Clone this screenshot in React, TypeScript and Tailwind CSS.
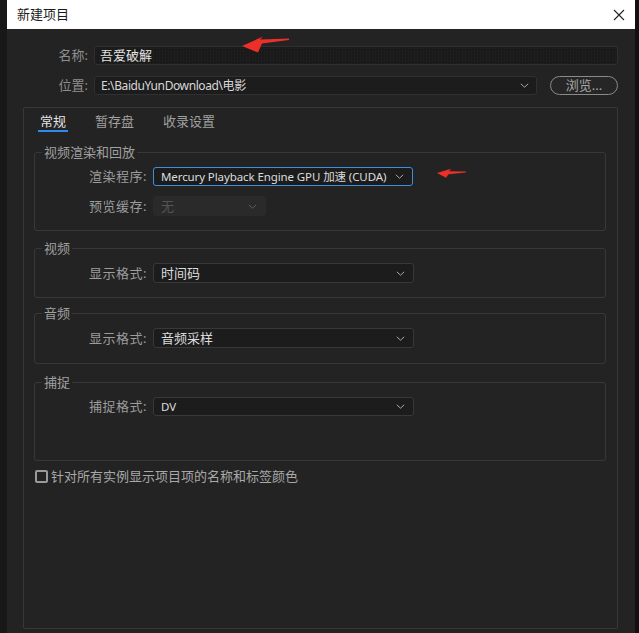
import React from 'react';

const Chevron = () => (
  <svg width="9" height="5" viewBox="0 0 9 5" className="shrink-0">
    <path d="M0.8 0.8 L4.5 4.2 L8.2 0.8" fill="none" stroke="#a8a8a8" strokeWidth="1" />
  </svg>
);

type SelectProps = {
  value: string;
  width: string;
  active?: boolean;
  disabled?: boolean;
  height?: string;
  small?: boolean;
};

const Select = ({ value, width, active, disabled, height = 'h-[20px]', small }: SelectProps) => (
  <div
    className={`${width} ${height} flex items-center justify-between pl-[7px] pr-[8px] rounded-[3px] border ${
      active
        ? 'border-[#3d8fe0] bg-[#1c1c1c]'
        : disabled
        ? 'border-[#2a2a2a] bg-[#2a2a2a]'
        : 'border-[#383838] bg-[#1c1c1c]'
    }`}
  >
    <span
      className={`whitespace-nowrap leading-none ${small ? 'text-[11.5px] tracking-[-0.1px]' : 'text-[13px]'} ${
        disabled ? 'text-[#555]' : 'text-[#dcdcdc]'
      }`}
    >
      {value}
    </span>
    <span className={disabled ? 'opacity-40' : ''}>
      <Chevron />
    </span>
  </div>
);

const Group = ({ title, children, pb }: { title: string; children: React.ReactNode; pb: string }) => (
  <fieldset className={`border border-[#383838] rounded-[3px] pt-[6px] ${pb} flex flex-col gap-[10px]`}>
    <legend className="ml-[7px] px-[2px] text-[13px] leading-[18px] text-[#a0a0a0]">{title}</legend>
    {children}
  </fieldset>
);

const Row = ({ label, children }: { label: string; children: React.ReactNode }) => (
  <div className="flex items-center gap-[6px]">
    <span className="w-[112px] text-right text-[13px] leading-none tracking-[0.5px] text-[#9c9c9c]">{label}</span>
    {children}
  </div>
);

export default function App() {
  return (
    <div className="relative flex w-[639px] h-[633px] overflow-hidden bg-[#111] font-['Noto_Sans','Noto_Sans_CJK_SC',sans-serif]">
      <div className="w-[7px] bg-[#181818]" />
      <div className="flex-1 flex flex-col bg-[#232323]">
        <div className="h-[29px] bg-white flex items-center justify-between pl-[10px] pr-[10px]">
          <span className="text-[13px] text-[#1a1a1a]">新建项目</span>
          <svg width="12" height="12" viewBox="0 0 12 12">
            <path d="M1 1 L11 11 M11 1 L1 11" stroke="#222" strokeWidth="1.1" />
          </svg>
        </div>

        <div className="flex-1 flex flex-col pt-[17px] pl-[16px] pr-[17px] pb-[4px]">
          <div className="flex items-center gap-[6px] h-[19px]">
            <span className="w-[65px] text-right text-[13px] leading-none text-[#8e8e8e]">名称:</span>
            <div className="flex-1 h-[19px] flex items-center pl-[5px] rounded-[3px] border border-[#303030] bg-[#1a1a1a] bg-[radial-gradient(#242424_0.7px,transparent_0.7px)] bg-size-[3px_3px]">
              <span className="text-[13px] leading-none text-[#e2e2e2]">吾爱破解</span>
            </div>
          </div>

          <div className="flex items-center mt-[11px] h-[19px]">
            <span className="w-[65px] text-right text-[13px] leading-none text-[#8e8e8e]">位置:</span>
            <div className="ml-[6px] flex-1 h-[19px] flex items-center justify-between pl-[6px] pr-[7px] rounded-[3px] border border-[#303030] bg-[#1c1c1c]">
              <span className="text-[12px] leading-none tracking-[-0.4px] text-[#d8d8d8]">E:\BaiduYunDownload\电影</span>
              <Chevron />
            </div>
            <div className="ml-[13px] w-[68px] h-[19px] flex items-center justify-center rounded-full border border-[#8a8a8a] bg-[#262626]">
              <span className="text-[13px] leading-none text-[#a8a8a8]">浏览...</span>
            </div>
          </div>

          <div className="mt-[12px] flex-1 border border-[#383838] rounded-[2px] flex flex-col">
            <div className="flex gap-[25px] pl-[14px]">
              <div className="pt-[4px] px-[2px] border-b-2 border-[#2d8ceb] text-[13px] leading-[18px] text-[#e4e4e4]">常规</div>
              <div className="pt-[4px] px-[2px] border-b-2 border-transparent text-[13px] leading-[18px] text-[#a0a0a0]">暂存盘</div>
              <div className="pt-[4px] px-[2px] border-b-2 border-transparent text-[13px] leading-[18px] text-[#a0a0a0]">收录设置</div>
            </div>

            <div className="ml-[10px] mr-[11px] mt-[11px] flex flex-col">
              <Group title="视频渲染和回放" pb="pb-[14px]">
                <Row label="渲染程序:">
                  <Select value="Mercury Playback Engine GPU 加速 (CUDA)" width="w-[260px]" height="h-[19px]" active small />
                </Row>
                <Row label="预览缓存:">
                  <Select value="无" width="w-[113px]" disabled />
                </Row>
              </Group>

              <div className="mt-[8px]">
                <Group title="视频" pb="pb-[14px]">
                  <Row label="显示格式:">
                    <Select value="时间码" width="w-[261px]" />
                  </Row>
                </Group>
              </div>

              <div className="mt-[6px]">
                <Group title="音频" pb="pb-[15px]">
                  <Row label="显示格式:">
                    <Select value="音频采样" width="w-[261px]" />
                  </Row>
                </Group>
              </div>

              <div className="mt-[9px]">
                <Group title="捕捉" pb="pb-[44px]">
                  <Row label="捕捉格式:">
                    <Select value="DV" width="w-[261px]" height="h-[19px]" small />
                  </Row>
                </Group>
              </div>

              <div className="mt-[9px] ml-[1px] flex items-center gap-[3px] h-[13px]">
                <div className="w-[13px] h-[13px] rounded-[2px] border-2 border-[#9a9a9a]" />
                <span className="text-[13px] leading-none text-[#a8a8a8]">针对所有实例显示项目项的名称和标签颜色</span>
              </div>
            </div>
          </div>
        </div>
      </div>
      <div className="w-[4px] bg-[#111]" />

      <svg className="absolute left-[236px] top-[33px]" width="56" height="22" viewBox="236 33 56 22">
        <path d="M242 46 L263 36.5 L260 39.5 L289 38.5 L289 40 L262 43.5 L258 52.5 Z" fill="#ec2f28" />
      </svg>
      <svg className="absolute left-[434px] top-[166px]" width="34" height="14" viewBox="434 166 34 14">
        <path d="M437 173 L451 168.8 L449 171.2 L466 171.6 L466 172.6 L448.5 174.2 L446 177.8 Z" fill="#ec2f28" />
      </svg>
    </div>
  );
}
